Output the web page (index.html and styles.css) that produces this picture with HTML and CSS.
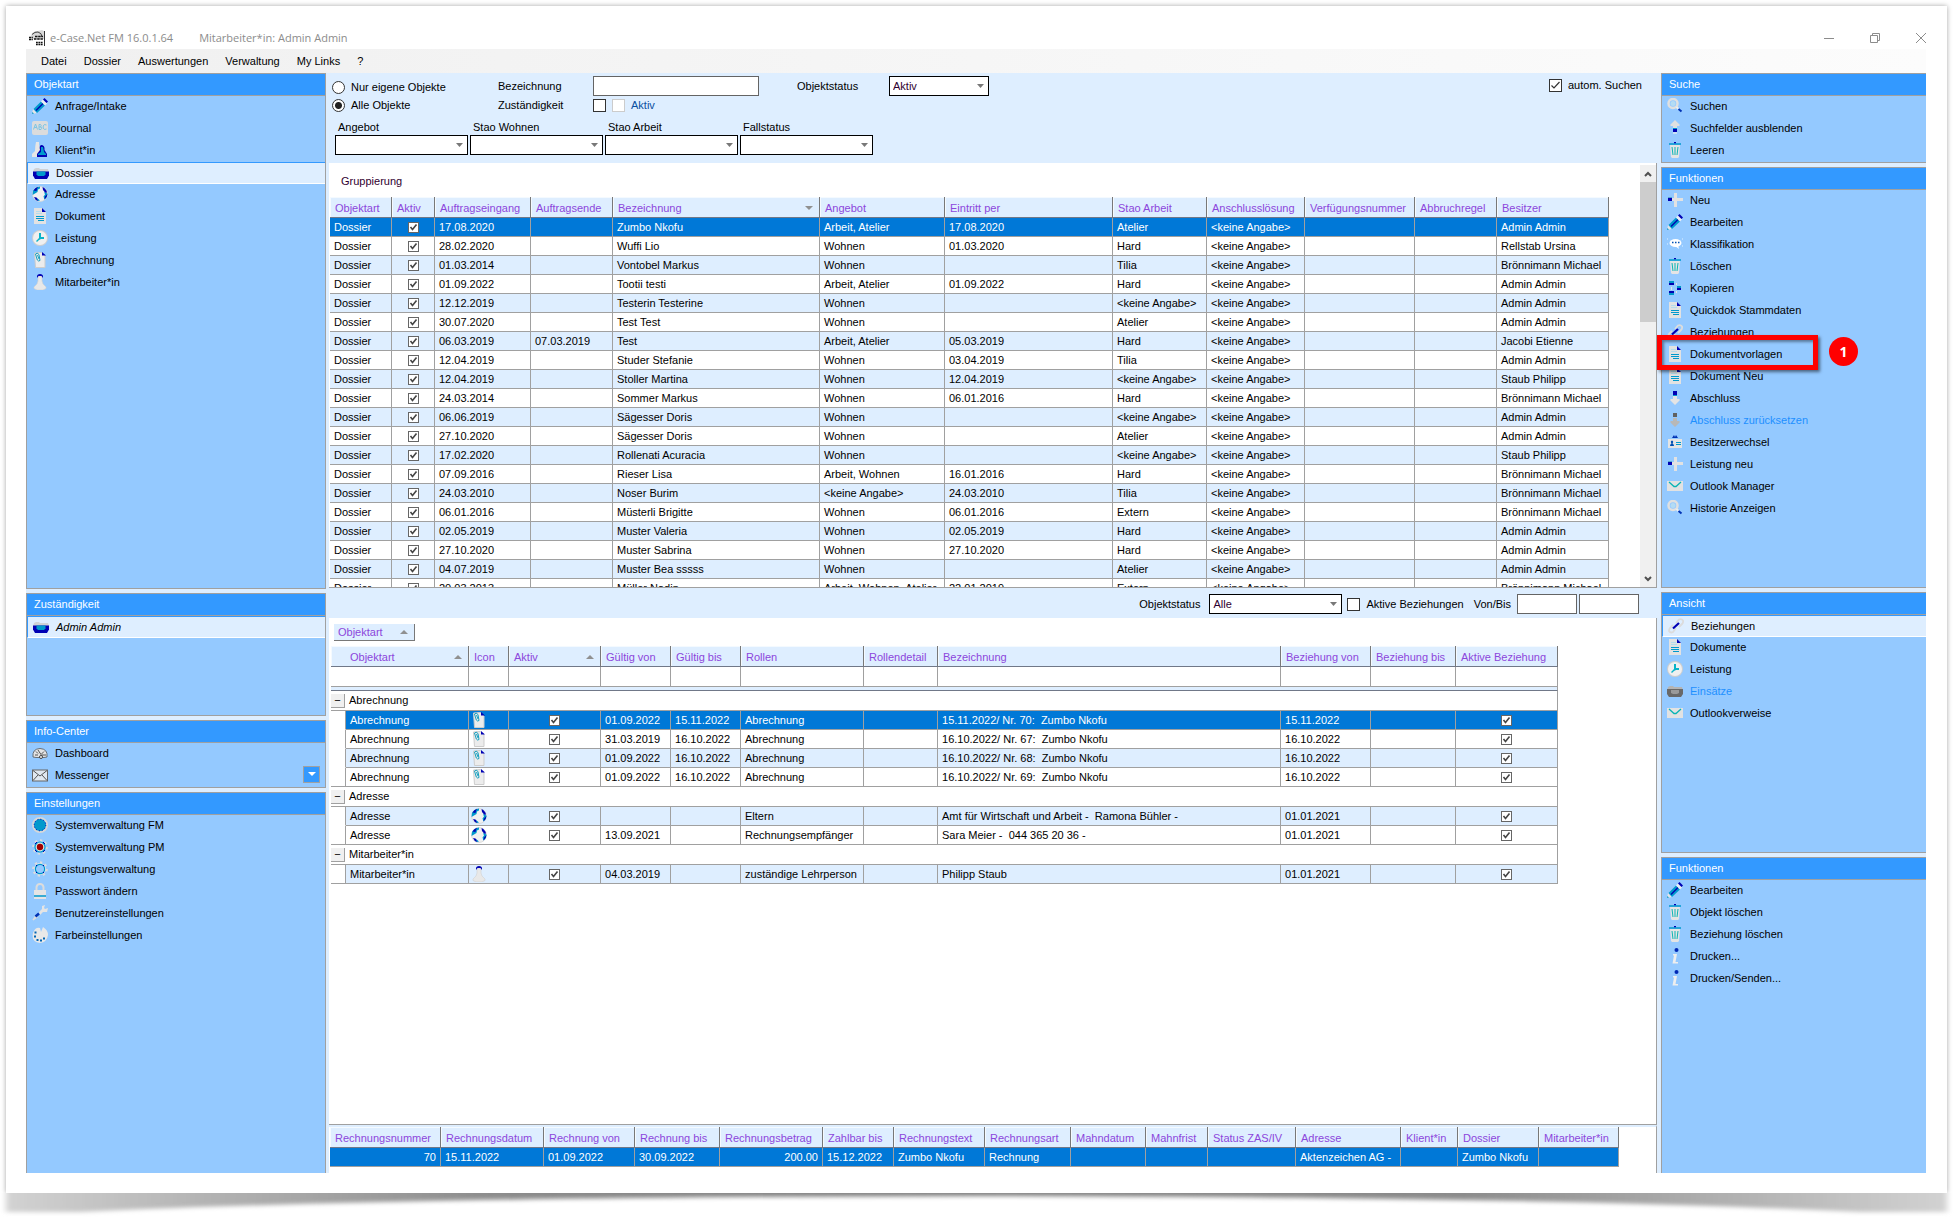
FILE: index.html
```html
<!DOCTYPE html>
<html lang="de">
<head>
<meta charset="utf-8">
<title>e-Case.Net FM</title>
<link rel="stylesheet" href="styles.css">
</head>
<body>
<svg class="defs" aria-hidden="true">
  <symbol id="pencil" viewBox="0 0 16 16"><path d="M0 16l1-5 4 4z" fill="#e6e6e6"/><path d="M0 16l.4-2 1.6 1.6z" fill="#09c"/><path d="M1.500 11L9 3.500 13 7.500 5 15z" fill="#09c"/><path d="M4 12.500L11 5.500" stroke="#0000b4" stroke-width="1.300"/><path d="M9 3.500l2-2 4 4-2 2z" fill="#e8eef4"/><path d="M11 1.500L12.500 0 16 3.500l-1.500 1.500z" fill="#0000b4"/></symbol>
  <symbol id="abc" viewBox="0 0 16 16"><rect y="1" width="16" height="14" rx="2" fill="#dcdcdc"/><path d="M1.500 9.500L3.500 4l2 5.500M2.300 7.500h2.400M7 4.500v5h2q1.500-1.200 0-2.500H7M7 4.500h1.500q1.500 1.200 0 2.500M14.500 5q-2.500-1.500-3.300 1v2q.8 2.500 3.300 1" fill="none" stroke="#7cc4e4"/></symbol>
  <symbol id="client" viewBox="0 0 16 16"><path d="M4 0h3v3l1 3v9H0v-3q2-2 3-3 0-5 1-9z" fill="#e6e6e6"/><path d="M9 3q4 0 3.500 5L15 12v3H5v-3l3-4Q7 4 9 3z" fill="#0000b4"/><path d="M9 5h2l1 5 2 2v1H6v-1l3-2z" fill="#09c"/></symbol>
  <symbol id="folder" viewBox="0 0 16 16"><path d="M1 4l2-1h3l1 1h8l1 3H0z" fill="#cfd2d6"/><path d="M0 6.500h16v4L14 14H2L0 10.500z" fill="#0000b4"/><path d="M3.500 6.500h9v3L11 11H5L3.500 9.500z" fill="#09c"/></symbol>
  <symbol id="folder-off" viewBox="0 0 16 16"><path d="M1 4l2-1h3l1 1h8l1 4H0z" fill="#b4b4b4"/><path d="M0 6h16v5l-2 3H2l-2-3z" fill="#696969"/><path d="M4 7h8v3l-2 1H6l-2-1z" fill="#9a9a9a"/></symbol>
  <symbol id="globe" viewBox="0 0 16 16"><circle cx="8" cy="8" r="7.500" fill="#f0f0f0" stroke="#d4d4d4" stroke-width=".8"/><path d="M8 .500Q3 1 1 5L.500 9 3 7.500 5.500 6 6 3.500 8 2.500z" fill="#09c"/><path d="M6 .800Q3 2 1.500 4.500L4.500 5 5 3zM10.500 1q4 2 4.500 5.500l-1.500.500L11 4z" fill="#0000b4"/><path d="M12 6l3.500 1.500Q15 12 12.500 13.500l-1-3 1.500-2z" fill="#09c"/><path d="M15.500 8q-.3 3.500-3 5.500l.5-3zM2 11l2.500.5 2 2.500-.5 1Q3 14 2 11z" fill="#0000b4"/><path d="M5 12l3 2.500L6 15z" fill="#09c"/></symbol>
  <symbol id="doc" viewBox="0 0 16 16"><path d="M2 0h8l4 4v12H2z" fill="#e2e2e2"/><path d="M10 0v4h4z" fill="#0000b4"/><path d="M4 3.500h5M4 5.500h6" stroke="#b4dcec"/><path d="M4 8.500h8M4 10.500h8M6 12.500h6" stroke="#09c"/></symbol>
  <symbol id="clock" viewBox="0 0 16 16"><circle cx="8" cy="8" r="8" fill="#cfcfcf"/><circle cx="8" cy="8" r="7" fill="#f0f0f0"/><path d="M7 3h2v4h3v2H9l-2 1-2 2-1-1 3-3z" fill="#09b4c8"/></symbol>
  <symbol id="clip" viewBox="0 0 16 16"><path d="M2.500 1l7-.500L13 4v11.500H3.500z" fill="#ececec" stroke="#cdcdcd"/><path d="M10 0v3.500h4z" fill="#0000b4"/><path d="M3.500 2l1.800 6q1.200 1.800 2.700.500L7 2.500Q5 0 3.500 2M5.500 3l1.500 4" fill="none" stroke="#09b" stroke-width=".9"/></symbol>
  <symbol id="person" viewBox="0 0 16 16"><path d="M6 2h4v5l1 3 3 3v1.500L11 16H5l-3-1.500V13l3-3 1-3z" fill="#e8e8e8" stroke="#d2d2d2" stroke-width=".6"/><path d="M5 2.500Q5 0 8 0t3 2.500V4L9.500 2h-3L5 4z" fill="#0000b4"/></symbol>
  <symbol id="search" viewBox="0 0 16 16"><circle cx="6" cy="5.500" r="4.500" fill="none" stroke="#e0e0e0" stroke-width="2.500"/><circle cx="6" cy="5.500" r="2.500" fill="#b4dcf4"/><path d="M9.500 9l2 2" stroke="#eee" stroke-width="2"/><path d="M11.500 11l3 2.500" stroke="#0032b4" stroke-width="2"/></symbol>
  <symbol id="up" viewBox="0 0 16 16"><path d="M8 0l5 5-1 1h-2v3H6V6H4L3 5z" fill="#e0e0e0"/><path d="M6 9h4v3H6z" fill="#0000b4"/><path d="M6 12h4v2H6z" fill="#c8e0f4"/><path d="M6 8h4v1H6z" fill="#09c"/></symbol>
  <symbol id="down" viewBox="0 0 16 16"><path d="M6 1h4v4H6z" fill="#0000b4"/><path d="M6 5h4v1H6z" fill="#09c"/><path d="M6 6h4v3h2l1 1-5 5-5-5 1-1h2z" fill="#e4e4e4"/></symbol>
  <symbol id="down-off" viewBox="0 0 16 16"><path d="M6 1h4v4H6z" fill="#606060"/><path d="M6 6h4v3h2l1 1-5 5-5-5 1-1h2z" fill="#b8b8b8"/></symbol>
  <symbol id="trash" viewBox="0 0 16 16"><path d="M3 3h10l-1 12-1 1H5l-1-1z" fill="#e4e4e4"/><path d="M2 2h12" stroke="#09c" stroke-width="1.500"/><path d="M7 .500h2" stroke="#0000b4" stroke-width="1.500"/><path d="M5 5l1 8M8 5v8M11 5l-1 8" stroke="#09b4b4"/></symbol>
  <symbol id="plus" viewBox="0 0 16 16"><path d="M7 1h3v5h6v3h-6v6H7V9H5V6h2z" fill="#e2e2e2"/><path d="M1 6h4v3H1z" fill="#0000b4"/><path d="M1 5h4v1H1z" fill="#5ac"/></symbol>
  <symbol id="speech" viewBox="0 0 16 16"><ellipse cx="8.500" cy="7" rx="6" ry="4" fill="#fff"/><path d="M8 10l4 3-1-4z" fill="#fff"/><path d="M5 6.500h1.500M8 6.500h1.500M11 6.500h1.500" stroke="#0050b4" stroke-width="1.500"/><path d="M0 3h1M0 8h1M15 3h1M15 10h1" stroke="#e0f0ff"/></symbol>
  <symbol id="nodes" viewBox="0 0 16 16"><path d="M2 1h5v4H2zM2 11h5v4H2zM10 6h4v4h-4z" fill="#0096c8"/><path d="M2 3h5v2H2zM2 11h5v2H2zM10 8h4v2h-4z" fill="#0000b4"/><path d="M9 3h1v2H9zM4 7h1v3H4zM9 11h1v2H9z" fill="#e4e4e4"/></symbol>
  <symbol id="link" viewBox="0 0 16 16"><path d="M8 5l3-3.500q2.500-1 4 1 .5 2-1 3.500l-3 3M8 10l-3 4q-2.500 1.500-4-1 0-1.500 1-3l3-3" fill="none" stroke="#dcdcdc" stroke-width="1.800"/><path d="M5 10.500L11 5" stroke="#0000b4" stroke-width="2.200"/></symbol>
  <symbol id="badge" viewBox="0 0 16 16"><rect x="1" y="5" width="14" height="9" fill="#e4e4e4"/><path d="M5 4l2-3 1 2 1-2 2 3z" fill="#0032b4"/><path d="M3 12q0-2 1.500-2.500Q3 7 5 6.500q2 .5.500 3Q7 10 7 12z" fill="#0050b4"/><path d="M9 8.500h5M9 10.500h5" stroke="#09c"/></symbol>
  <symbol id="mail" viewBox="0 0 16 16"><rect y="3" width="16" height="10" fill="#e2e2e2"/><path d="M2 4l5 4.500h2L14 4" fill="none" stroke="#09b4b4" stroke-width="1.300"/></symbol>
  <symbol id="info" viewBox="0 0 16 16"><path d="M6 6h4l-1.500 8H11v1.500H5.500L7 7.500H6z" fill="#eee"/><circle cx="9.500" cy="2" r="2" fill="#0028b4"/></symbol>
  <symbol id="gauge" viewBox="0 0 16 16"><path d="M1 12q-1-8 7-8.500Q16 4 15 12l-3 .500H4z" fill="#e4e4e4" stroke="#555" stroke-width=".8"/><path d="M6 5l4 6M4 6.500l2 2M12 6.500L9.500 9M3 10h3M10 10h4" stroke="#444" stroke-width=".9"/><circle cx="9" cy="12" r="1.500" fill="#fff" stroke="#444"/></symbol>
  <symbol id="envelope" viewBox="0 0 16 16"><rect x=".5" y="3" width="15" height="11" fill="#e0e8f0" stroke="#666"/><path d="M1 3.500l7 5.500 7-5.500M1 13.500L6 8M15 13.500L10 8" fill="none" stroke="#555"/></symbol>
  <symbol id="gear-full" viewBox="0 0 16 16"><circle cx="8" cy="8" r="7" fill="none" stroke="#d8d8d8" stroke-width="2"/><circle cx="8" cy="8" r="6" fill="#09c"/><circle cx="8" cy="8" r="5.800" fill="none" stroke="#0000b4" stroke-dasharray="1 2"/></symbol>
  <symbol id="gear-red" viewBox="0 0 16 16"><circle cx="8" cy="8" r="6.800" fill="none" stroke="#dcdcdc" stroke-width="2" stroke-dasharray="2.300 3"/><circle cx="8" cy="8" r="5" fill="#e4e4e4" stroke="#09c" stroke-width="1.200"/><circle cx="8" cy="8" r="3.200" fill="#a00000"/><path d="M3 5l2-2M11 3l2 2M13 11l-2 2M5 13l-2-2" stroke="#0000b4"/></symbol>
  <symbol id="gear" viewBox="0 0 16 16"><circle cx="8" cy="8" r="6.800" fill="none" stroke="#dcdcdc" stroke-width="2" stroke-dasharray="2.300 3"/><circle cx="8" cy="8" r="5.500" fill="#94c9ff" stroke="#e4e4e4"/><circle cx="8" cy="8" r="4.600" fill="none" stroke="#09c" stroke-width="1.200"/><path d="M4 5l1-1M11 4l1 1M12 11l-1 1M5 12l-1-1" stroke="#0000b4"/></symbol>
  <symbol id="lock" viewBox="0 0 16 16"><path d="M4.500 8V4Q5 1 8 1t3.500 3v4" fill="none" stroke="#dcdcdc" stroke-width="2"/><path d="M2 7h12v9H2z" fill="#e4e4e4"/><path d="M2 13h12" stroke="#09c" stroke-width="1.500"/></symbol>
  <symbol id="wrench" viewBox="0 0 16 16"><path d="M7 7l3-3 0-3 3-1-1 3 1 1 3-1-1 4-4 0-3 3z" fill="#e4e4e4"/><path d="M1 15l3-4 1 1z" stroke="#ddd" fill="none" stroke-width="1.500"/><path d="M3.500 11.500L7 8.500" stroke="#0032b4" stroke-width="2.500"/></symbol>
  <symbol id="palette" viewBox="0 0 16 16"><path d="M1 6q2-6 7-5l1 4 2-5q5 3 5 8-1 7-8 8Q-1 15 1 6z" fill="#e8e8e8"/><path d="M2.500 5.500h2M2 9.500h2M4.500 13h2M8 13.500h2M11 11.500h2" stroke="#0064b4" stroke-width="1.800"/></symbol>
</svg>

<div class="sheet">
  <header class="titlebar">
    <svg class="logo" viewBox="0 0 16 16"><path d="M2 6q1-5 7-5l4-1 2 1v8H4z" fill="#d8d8d8"/><path d="M3 4.500Q6 1.500 9 2q4 1 4 5" fill="none" stroke="#444"/><path d="M0 7.500h4M0 9.500h4M6 6.500h8M5 9h9" stroke="#111" stroke-width="1.400" stroke-dasharray="2.500 .700"/><path d="M7 12.500h7M7 14.500h7" stroke="#111" stroke-width="1.400" stroke-dasharray="1.800 .600"/><path d="M15.500 1v15" stroke="#333"/></svg>
    <span class="app-name">e-Case.Net FM 16.0.1.64</span>
    <span class="app-user">Mitarbeiter*in: Admin Admin</span>
    <div class="winctl">
      <button aria-label="Minimieren"><svg viewBox="0 0 10 10"><path d="M0 5.500h10"/></svg></button>
      <button aria-label="Verkleinern"><svg viewBox="0 0 10 10"><path d="M.500 2.500h7v7h-7zM2.500 2.500v-2h7v7h-2"/></svg></button>
      <button aria-label="Schliessen"><svg viewBox="0 0 10 10"><path d="M0 0l10 10M10 0L0 10"/></svg></button>
    </div>
  </header>
  <nav class="menubar">
    <button>Datei</button><button>Dossier</button><button>Auswertungen</button><button>Verwaltung</button><button>My Links</button><button>?</button>
  </nav>

  <div class="workspace">
    <aside class="side">
      <section class="panel p-objects">
        <h2>Objektart</h2>
        <ul>
          <li><button><svg><use href="#pencil"/></svg>Anfrage/Intake</button></li>
          <li><button><svg><use href="#abc"/></svg>Journal</button></li>
          <li><button><svg><use href="#client"/></svg>Klient*in</button></li>
          <li class="on"><button><svg><use href="#folder"/></svg>Dossier</button></li>
          <li><button><svg><use href="#globe"/></svg>Adresse</button></li>
          <li><button><svg><use href="#doc"/></svg>Dokument</button></li>
          <li><button><svg><use href="#clock"/></svg>Leistung</button></li>
          <li><button><svg><use href="#clip"/></svg>Abrechnung</button></li>
          <li><button><svg><use href="#person"/></svg>Mitarbeiter*in</button></li>
        </ul>
      </section>
      <section class="panel p-owner">
        <h2>Zuständigkeit</h2>
        <ul><li class="on"><button class="italic"><svg><use href="#folder"/></svg>Admin Admin</button></li></ul>
      </section>
      <section class="panel">
        <h2>Info-Center</h2>
        <ul>
          <li><button><svg><use href="#gauge"/></svg>Dashboard</button></li>
          <li><button><svg><use href="#envelope"/></svg>Messenger</button><button class="more" aria-label="Mehr"></button></li>
        </ul>
      </section>
      <section class="panel p-rest">
        <h2>Einstellungen</h2>
        <ul>
          <li><button><svg><use href="#gear-full"/></svg>Systemverwaltung FM</button></li>
          <li><button><svg><use href="#gear-red"/></svg>Systemverwaltung PM</button></li>
          <li><button><svg><use href="#gear"/></svg>Leistungsverwaltung</button></li>
          <li><button><svg><use href="#lock"/></svg>Passwort ändern</button></li>
          <li><button><svg><use href="#wrench"/></svg>Benutzereinstellungen</button></li>
          <li><button><svg><use href="#palette"/></svg>Farbeinstellungen</button></li>
        </ul>
      </section>
    </aside>

    <main class="center">
      <form class="filter">
        <div class="filter-top">
          <div class="radios">
            <label><input type="radio" name="scope">Nur eigene Objekte</label>
            <label><input type="radio" name="scope" checked>Alle Objekte</label>
          </div>
          <div class="fields">
            <label for="bez">Bezeichnung</label><input type="text" id="bez">
            <label for="zust">Zuständigkeit</label>
            <div class="checks"><input type="checkbox" id="zust"><label class="off"><input type="checkbox" disabled>Aktiv</label></div>
          </div>
          <div class="status"><label for="stat">Objektstatus</label><select id="stat"><option>Aktiv</option></select></div>
          <label class="auto"><input type="checkbox" checked>autom. Suchen</label>
        </div>
        <div class="combos">
          <label>Angebot<select><option></option></select></label>
          <label>Stao Wohnen<select><option></option></select></label>
          <label>Stao Arbeit<select><option></option></select></label>
          <label>Fallstatus<select><option></option></select></label>
        </div>
      </form>

      <section class="upper">
        <div class="view">
          <div class="grouping">Gruppierung</div>
          <table class="grid t-dossier">
            <colgroup><col class="w62"><col class="w43"><col class="w96"><col class="w82"><col class="w207"><col class="w125"><col class="w168"><col class="w94"><col class="w98"><col class="w110"><col class="w82"><col class="w112"></colgroup>
            <thead><tr><th>Objektart</th><th>Aktiv</th><th>Auftragseingang</th><th>Auftragsende</th><th><span>Bezeichnung<i class="sort desc"></i></span></th><th>Angebot</th><th>Eintritt per</th><th>Stao Arbeit</th><th>Anschlusslösung</th><th>Verfügungsnummer</th><th>Abbruchregel</th><th>Besitzer</th></tr></thead>
            <tbody>
            <tr class="sel"><td>Dossier</td><td><input type="checkbox" aria-label="Aktiv" checked></td><td>17.08.2020</td><td></td><td>Zumbo Nkofu</td><td>Arbeit, Atelier</td><td>17.08.2020</td><td>Atelier</td><td>&lt;keine Angabe&gt;</td><td></td><td></td><td>Admin Admin</td></tr>
            <tr><td>Dossier</td><td><input type="checkbox" aria-label="Aktiv" checked></td><td>28.02.2020</td><td></td><td>Wuffi Lio</td><td>Wohnen</td><td>01.03.2020</td><td>Hard</td><td>&lt;keine Angabe&gt;</td><td></td><td></td><td>Rellstab Ursina</td></tr>
            <tr><td>Dossier</td><td><input type="checkbox" aria-label="Aktiv" checked></td><td>01.03.2014</td><td></td><td>Vontobel Markus</td><td>Wohnen</td><td></td><td>Tilia</td><td>&lt;keine Angabe&gt;</td><td></td><td></td><td>Brönnimann Michael</td></tr>
            <tr><td>Dossier</td><td><input type="checkbox" aria-label="Aktiv" checked></td><td>01.09.2022</td><td></td><td>Tootii testi</td><td>Arbeit, Atelier</td><td>01.09.2022</td><td>Hard</td><td>&lt;keine Angabe&gt;</td><td></td><td></td><td>Admin Admin</td></tr>
            <tr><td>Dossier</td><td><input type="checkbox" aria-label="Aktiv" checked></td><td>12.12.2019</td><td></td><td>Testerin Testerine</td><td>Wohnen</td><td></td><td>&lt;keine Angabe&gt;</td><td>&lt;keine Angabe&gt;</td><td></td><td></td><td>Admin Admin</td></tr>
            <tr><td>Dossier</td><td><input type="checkbox" aria-label="Aktiv" checked></td><td>30.07.2020</td><td></td><td>Test Test</td><td>Wohnen</td><td></td><td>Atelier</td><td>&lt;keine Angabe&gt;</td><td></td><td></td><td>Admin Admin</td></tr>
            <tr><td>Dossier</td><td><input type="checkbox" aria-label="Aktiv" checked></td><td>06.03.2019</td><td>07.03.2019</td><td>Test</td><td>Arbeit, Atelier</td><td>05.03.2019</td><td>Hard</td><td>&lt;keine Angabe&gt;</td><td></td><td></td><td>Jacobi Etienne</td></tr>
            <tr><td>Dossier</td><td><input type="checkbox" aria-label="Aktiv" checked></td><td>12.04.2019</td><td></td><td>Studer Stefanie</td><td>Wohnen</td><td>03.04.2019</td><td>Tilia</td><td>&lt;keine Angabe&gt;</td><td></td><td></td><td>Admin Admin</td></tr>
            <tr><td>Dossier</td><td><input type="checkbox" aria-label="Aktiv" checked></td><td>12.04.2019</td><td></td><td>Stoller Martina</td><td>Wohnen</td><td>12.04.2019</td><td>&lt;keine Angabe&gt;</td><td>&lt;keine Angabe&gt;</td><td></td><td></td><td>Staub Philipp</td></tr>
            <tr><td>Dossier</td><td><input type="checkbox" aria-label="Aktiv" checked></td><td>24.03.2014</td><td></td><td>Sommer Markus</td><td>Wohnen</td><td>06.01.2016</td><td>Hard</td><td>&lt;keine Angabe&gt;</td><td></td><td></td><td>Brönnimann Michael</td></tr>
            <tr><td>Dossier</td><td><input type="checkbox" aria-label="Aktiv" checked></td><td>06.06.2019</td><td></td><td>Sägesser Doris</td><td>Wohnen</td><td></td><td>&lt;keine Angabe&gt;</td><td>&lt;keine Angabe&gt;</td><td></td><td></td><td>Admin Admin</td></tr>
            <tr><td>Dossier</td><td><input type="checkbox" aria-label="Aktiv" checked></td><td>27.10.2020</td><td></td><td>Sägesser Doris</td><td>Wohnen</td><td></td><td>Atelier</td><td>&lt;keine Angabe&gt;</td><td></td><td></td><td>Admin Admin</td></tr>
            <tr><td>Dossier</td><td><input type="checkbox" aria-label="Aktiv" checked></td><td>17.02.2020</td><td></td><td>Rollenati Acuracia</td><td>Wohnen</td><td></td><td>&lt;keine Angabe&gt;</td><td>&lt;keine Angabe&gt;</td><td></td><td></td><td>Staub Philipp</td></tr>
            <tr><td>Dossier</td><td><input type="checkbox" aria-label="Aktiv" checked></td><td>07.09.2016</td><td></td><td>Rieser Lisa</td><td>Arbeit, Wohnen</td><td>16.01.2016</td><td>Hard</td><td>&lt;keine Angabe&gt;</td><td></td><td></td><td>Brönnimann Michael</td></tr>
            <tr><td>Dossier</td><td><input type="checkbox" aria-label="Aktiv" checked></td><td>24.03.2010</td><td></td><td>Noser Burim</td><td>&lt;keine Angabe&gt;</td><td>24.03.2010</td><td>Tilia</td><td>&lt;keine Angabe&gt;</td><td></td><td></td><td>Brönnimann Michael</td></tr>
            <tr><td>Dossier</td><td><input type="checkbox" aria-label="Aktiv" checked></td><td>06.01.2016</td><td></td><td>Müsterli Brigitte</td><td>Wohnen</td><td>06.01.2016</td><td>Extern</td><td>&lt;keine Angabe&gt;</td><td></td><td></td><td>Brönnimann Michael</td></tr>
            <tr><td>Dossier</td><td><input type="checkbox" aria-label="Aktiv" checked></td><td>02.05.2019</td><td></td><td>Muster Valeria</td><td>Wohnen</td><td>02.05.2019</td><td>Hard</td><td>&lt;keine Angabe&gt;</td><td></td><td></td><td>Admin Admin</td></tr>
            <tr><td>Dossier</td><td><input type="checkbox" aria-label="Aktiv" checked></td><td>27.10.2020</td><td></td><td>Muster Sabrina</td><td>Wohnen</td><td>27.10.2020</td><td>Hard</td><td>&lt;keine Angabe&gt;</td><td></td><td></td><td>Admin Admin</td></tr>
            <tr><td>Dossier</td><td><input type="checkbox" aria-label="Aktiv" checked></td><td>04.07.2019</td><td></td><td>Muster Bea sssss</td><td>Wohnen</td><td></td><td>Atelier</td><td>&lt;keine Angabe&gt;</td><td></td><td></td><td>Admin Admin</td></tr>
            <tr><td>Dossier</td><td><input type="checkbox" aria-label="Aktiv" checked></td><td>20.03.2013</td><td></td><td>Müller Nadin</td><td>Arbeit, Wohnen, Atelier</td><td>22.01.2019</td><td>Extern</td><td>&lt;keine Angabe&gt;</td><td></td><td></td><td>Brönnimann Michael</td></tr>
            </tbody>
          </table>
        </div>
        <div class="scrollbar">
          <button aria-label="Nach oben"><svg viewBox="0 0 8 6"><path d="M1 5l3-3 3 3"/></svg></button>
          <div class="track"><div class="thumb"></div></div>
          <button aria-label="Nach unten"><svg viewBox="0 0 8 6"><path d="M1 1l3 3 3-3"/></svg></button>
        </div>
      </section>

      <form class="relbar">
        <label for="rstat">Objektstatus</label><select id="rstat"><option>Alle</option></select>
        <label class="active"><input type="checkbox">Aktive Beziehungen</label>
        <label for="von">Von/Bis</label><input type="text" id="von"><input type="text" aria-label="Bis">
      </form>

      <section class="lower">
        <button class="chip">Objektart<i class="sort asc"></i></button>
        <table class="grid t-rel">
          <colgroup><col class="w15"><col class="w123"><col class="w40"><col class="w92"><col class="w70"><col class="w70"><col class="w123"><col class="w74"><col class="w343"><col class="w90"><col class="w85"><col class="w102"></colgroup>
          <thead>
            <tr><th colspan="2" class="first"><span>Objektart<i class="sort asc"></i></span></th><th>Icon</th><th><span>Aktiv<i class="sort asc"></i></span></th><th>Gültig von</th><th>Gültig bis</th><th>Rollen</th><th>Rollendetail</th><th>Bezeichnung</th><th>Beziehung von</th><th>Beziehung bis</th><th>Aktive Beziehung</th></tr>
            <tr class="search"><td colspan="2"></td><td></td><td></td><td></td><td></td><td></td><td></td><td></td><td></td><td></td><td></td></tr>
            <tr class="strip"><td colspan="12"></td></tr>
          </thead>
          <tbody>
            <tr class="group"><td colspan="12"><button aria-label="Zuklappen">−</button>Abrechnung</td></tr>
            <tr class="sel"><td class="ind"></td><td>Abrechnung</td><td><svg><use href="#clip"/></svg></td><td class="c"><input type="checkbox" aria-label="Aktiv" checked></td><td>01.09.2022</td><td>15.11.2022</td><td>Abrechnung</td><td></td><td>15.11.2022/ Nr. 70:  Zumbo Nkofu</td><td>15.11.2022</td><td></td><td class="c"><input type="checkbox" aria-label="Aktive Beziehung" checked></td></tr>
            <tr><td class="ind"></td><td>Abrechnung</td><td><svg><use href="#clip"/></svg></td><td class="c"><input type="checkbox" aria-label="Aktiv" checked></td><td>31.03.2019</td><td>16.10.2022</td><td>Abrechnung</td><td></td><td>16.10.2022/ Nr. 67:  Zumbo Nkofu</td><td>16.10.2022</td><td></td><td class="c"><input type="checkbox" aria-label="Aktive Beziehung" checked></td></tr>
            <tr class="alt"><td class="ind"></td><td>Abrechnung</td><td><svg><use href="#clip"/></svg></td><td class="c"><input type="checkbox" aria-label="Aktiv" checked></td><td>01.09.2022</td><td>16.10.2022</td><td>Abrechnung</td><td></td><td>16.10.2022/ Nr. 68:  Zumbo Nkofu</td><td>16.10.2022</td><td></td><td class="c"><input type="checkbox" aria-label="Aktive Beziehung" checked></td></tr>
            <tr class="end"><td class="ind"></td><td>Abrechnung</td><td><svg><use href="#clip"/></svg></td><td class="c"><input type="checkbox" aria-label="Aktiv" checked></td><td>01.09.2022</td><td>16.10.2022</td><td>Abrechnung</td><td></td><td>16.10.2022/ Nr. 69:  Zumbo Nkofu</td><td>16.10.2022</td><td></td><td class="c"><input type="checkbox" aria-label="Aktive Beziehung" checked></td></tr>
            <tr class="group"><td colspan="12"><button aria-label="Zuklappen">−</button>Adresse</td></tr>
            <tr class="alt"><td class="ind"></td><td>Adresse</td><td><svg><use href="#globe"/></svg></td><td class="c"><input type="checkbox" aria-label="Aktiv" checked></td><td></td><td></td><td>Eltern</td><td></td><td>Amt für Wirtschaft und Arbeit -  Ramona Bühler -</td><td>01.01.2021</td><td></td><td class="c"><input type="checkbox" aria-label="Aktive Beziehung" checked></td></tr>
            <tr class="end"><td class="ind"></td><td>Adresse</td><td><svg><use href="#globe"/></svg></td><td class="c"><input type="checkbox" aria-label="Aktiv" checked></td><td>13.09.2021</td><td></td><td>Rechnungsempfänger</td><td></td><td>Sara Meier -  044 365 20 36 -</td><td>01.01.2021</td><td></td><td class="c"><input type="checkbox" aria-label="Aktive Beziehung" checked></td></tr>
            <tr class="group"><td colspan="12"><button aria-label="Zuklappen">−</button>Mitarbeiter*in</td></tr>
            <tr class="alt end"><td class="ind"></td><td>Mitarbeiter*in</td><td><svg><use href="#person"/></svg></td><td class="c"><input type="checkbox" aria-label="Aktiv" checked></td><td>04.03.2019</td><td></td><td>zuständige Lehrperson</td><td></td><td>Philipp Staub</td><td>01.01.2021</td><td></td><td class="c"><input type="checkbox" aria-label="Aktive Beziehung" checked></td></tr>
          </tbody>
        </table>
      </section>

      <section class="bills">
        <table class="grid t-bill">
          <colgroup><col class="w111"><col class="w103"><col class="w91"><col class="w85"><col class="w103"><col class="w71"><col class="w91"><col class="w86"><col class="w75"><col class="w62"><col class="w88"><col class="w105"><col class="w57"><col class="w81"><col class="w80"></colgroup>
          <thead><tr><th>Rechnungsnummer</th><th>Rechnungsdatum</th><th>Rechnung von</th><th>Rechnung bis</th><th>Rechnungsbetrag</th><th>Zahlbar bis</th><th>Rechnungstext</th><th>Rechnungsart</th><th>Mahndatum</th><th>Mahnfrist</th><th>Status ZAS/IV</th><th>Adresse</th><th>Klient*in</th><th>Dossier</th><th>Mitarbeiter*in</th></tr></thead>
          <tbody><tr class="sel"><td class="r">70</td><td>15.11.2022</td><td>01.09.2022</td><td>30.09.2022</td><td class="r">200.00</td><td>15.12.2022</td><td>Zumbo Nkofu</td><td>Rechnung</td><td></td><td></td><td></td><td>Aktenzeichen AG -</td><td></td><td>Zumbo Nkofu</td><td></td></tr></tbody>
        </table>
      </section>
    </main>

    <aside class="side right">
      <section class="panel p-search">
        <h2>Suche</h2>
        <ul>
          <li><button><svg><use href="#search"/></svg>Suchen</button></li>
          <li><button><svg><use href="#up"/></svg>Suchfelder ausblenden</button></li>
          <li><button><svg><use href="#trash"/></svg>Leeren</button></li>
        </ul>
      </section>
      <section class="panel p-func">
        <h2>Funktionen</h2>
        <ul>
          <li><button><svg><use href="#plus"/></svg>Neu</button></li>
          <li><button><svg><use href="#pencil"/></svg>Bearbeiten</button></li>
          <li><button><svg><use href="#speech"/></svg>Klassifikation</button></li>
          <li><button><svg><use href="#trash"/></svg>Löschen</button></li>
          <li><button><svg><use href="#nodes"/></svg>Kopieren</button></li>
          <li><button><svg><use href="#doc"/></svg>Quickdok Stammdaten</button></li>
          <li><button><svg><use href="#link"/></svg>Beziehungen</button></li>
          <li class="marked"><button><svg><use href="#doc"/></svg>Dokumentvorlagen</button><span class="frame"></span><span class="step">1</span></li>
          <li><button><svg><use href="#doc"/></svg>Dokument Neu</button></li>
          <li><button><svg><use href="#down"/></svg>Abschluss</button></li>
          <li><button disabled><svg><use href="#down-off"/></svg>Abschluss zurücksetzen</button></li>
          <li><button><svg><use href="#badge"/></svg>Besitzerwechsel</button></li>
          <li><button><svg><use href="#plus"/></svg>Leistung neu</button></li>
          <li><button><svg><use href="#mail"/></svg>Outlook Manager</button></li>
          <li><button><svg><use href="#search"/></svg>Historie Anzeigen</button></li>
        </ul>
      </section>
      <section class="panel p-view">
        <h2>Ansicht</h2>
        <ul>
          <li class="on"><button><svg><use href="#link"/></svg>Beziehungen</button></li>
          <li><button><svg><use href="#doc"/></svg>Dokumente</button></li>
          <li><button><svg><use href="#clock"/></svg>Leistung</button></li>
          <li><button disabled><svg><use href="#folder-off"/></svg>Einsätze</button></li>
          <li><button><svg><use href="#mail"/></svg>Outlookverweise</button></li>
        </ul>
      </section>
      <section class="panel p-rest">
        <h2>Funktionen</h2>
        <ul>
          <li><button><svg><use href="#pencil"/></svg>Bearbeiten</button></li>
          <li><button><svg><use href="#trash"/></svg>Objekt löschen</button></li>
          <li><button><svg><use href="#trash"/></svg>Beziehung löschen</button></li>
          <li><button><svg><use href="#info"/></svg>Drucken...</button></li>
          <li><button><svg><use href="#info"/></svg>Drucken/Senden...</button></li>
        </ul>
      </section>
    </aside>
  </div>
</div>
<svg class="curl" viewBox="0 0 1960 29" preserveAspectRatio="none" aria-hidden="true">
  <defs>
    <linearGradient id="cg"><stop offset="0" stop-color="#d2d2d2"/><stop offset=".1" stop-color="#b4b4b4"/><stop offset=".25" stop-color="#8c8c8c"/><stop offset=".5" stop-color="#808080"/><stop offset=".75" stop-color="#8c8c8c"/><stop offset=".9" stop-color="#b4b4b4"/><stop offset="1" stop-color="#d2d2d2"/></linearGradient>
    <filter id="cb" x="-1%" y="-50%" width="102%" height="200%"><feGaussianBlur stdDeviation="3 2"/></filter>
  </defs>
  <path d="M6-10V19H80Q400 4 980 3Q1560 4 1860 19H1947V-10z" fill="url(#cg)" filter="url(#cb)"/>
</svg>
</body>
</html>
```
FILE: styles.css
```css
* { box-sizing: border-box; }

body {
  margin: 0;
  min-height: 100vh;
  display: flex;
  flex-direction: column;
  background: #fff;
  color: #000;
  font: 11px/16px "Liberation Sans", Arial, sans-serif;
}

button, input, select {
  margin: 0;
  padding: 0;
  border: 0;
  border-radius: 0;
  background: none;
  color: inherit;
  font: inherit;
}

ul { margin: 0; padding: 0; list-style: none; }
.defs { display: none; }

.sheet {
  flex: 1;
  display: flex;
  flex-direction: column;
  margin: 6px 13px 0 6px;
  padding: 16px 21px 20px 20px;
  background: #fff;
  box-shadow: 0 0 5px rgba(0, 0, 0, .35);
  position: relative;
  z-index: 1;
  clip-path: inset(-6px -6px 0 -6px);
}

.curl { display: block; width: 100%; height: 29px; }

/* title bar and menu */
.titlebar {
  display: flex;
  align-items: center;
  height: 27px;
  padding-top: 4px;
  padding-left: 3px;
  color: #8c8c8c;
  font: 11px/16px "Open Sans", "Noto Sans", sans-serif;
}
.logo { width: 16px; height: 16px; margin-right: 5px; }
.app-name { margin-right: 26px; }
.winctl { display: flex; gap: 36px; margin-left: auto; }
.winctl button { display: flex; }
.winctl svg { width: 10px; height: 10px; fill: none; stroke: #8c8c8c; }

.menubar {
  display: flex;
  gap: 17px;
  height: 24px;
  padding-left: 15px;
  background: linear-gradient(90deg, #f0f0f0, #fcfcfc);
}

/* columns */
.workspace {
  flex: 1;
  display: grid;
  grid-template-columns: 300px minmax(0, 1fr) 265px;
  background: #deeeff;
}
.side { display: flex; flex-direction: column; gap: 4px; }
.panel {
  display: flex;
  flex-direction: column;
  border: 1px solid #a0a0a0;
  background: #94c9ff;
}
.right .panel { border-right: 0; }
.panel h2 {
  margin: 0;
  height: 22px;
  padding-left: 7px;
  border-bottom: 1px solid #a0a0a0;
  background: #39f;
  color: #fff;
  font-size: 11px;
  font-weight: normal;
  line-height: 21px;
}
.p-objects { min-height: 516px; }
.p-owner { min-height: 123px; }
.p-search { min-height: 89px; }
.p-func { min-height: 421px; }
.p-view { min-height: 261px; }
.p-rest { flex: 1; border-bottom: 0; }

.panel li { display: flex; align-items: center; height: 22px; }
.panel li > button:first-child {
  flex: 1;
  display: flex;
  align-items: center;
  gap: 7px;
  height: 22px;
  padding: 0 0 2px 5px;
  text-align: left;
}
.panel svg { width: 16px; height: 16px; }
.panel .on {
  border-top: 1px solid #39f;
  border-left: 1px solid #39f;
  border-bottom: 1px solid #fff;
  background: #deeeff;
}
.panel .on > button:first-child { padding-bottom: 0; }
.panel button:disabled { color: #1e90ff; }
.italic { font-style: italic; }
.panel .more {
  display: flex;
  align-items: center;
  justify-content: center;
  width: 17px;
  height: 17px;
  margin: 0 5px 4px 0;
  border: 1px solid #a0a0a0;
  background: #39f;
}
.more::after {
  content: "";
  border: 4px solid transparent;
  border-top-color: #fff;
  border-bottom: 0;
}

/* highlighted step */
.marked { position: relative; z-index: 2; }
.frame {
  position: absolute;
  left: -5px;
  top: -9px;
  width: 161px;
  height: 35px;
  border: 5px solid #f00;
  box-shadow: 2px 2px 3px rgba(0, 0, 0, .5), inset 2px 2px 3px rgba(0, 0, 0, .4);
  pointer-events: none;
}
.step {
  position: absolute;
  left: 167px;
  top: -7px;
  width: 29px;
  height: 29px;
  border-radius: 50%;
  background: #f00;
  color: #fff;
  font: bold 14px/29px "Open Sans", sans-serif;
  text-align: center;
}

/* form controls */
input[type="text"] { height: 20px; border: 1px solid #646464; background: #fff; }
select {
  appearance: none;
  height: 20px;
  padding-left: 3px;
  border: 1px solid #000;
  background: #fff url("data:image/svg+xml,%3Csvg xmlns='http://www.w3.org/2000/svg' width='7' height='4'%3E%3Cpath d='M0 0h7L3.5 4z' fill='%23787878'/%3E%3C/svg%3E") no-repeat right 4px center;
  color: #300030;
}
input[type="checkbox"] {
  appearance: none;
  flex: none;
  width: 13px;
  height: 13px;
  border: 1px solid #333;
  background: #fff;
}
input[type="checkbox"]:disabled { border-color: #ccc; }
input[type="checkbox"]:checked {
  background: #fff url("data:image/svg+xml,%3Csvg xmlns='http://www.w3.org/2000/svg' viewBox='0 0 11 11'%3E%3Cpath d='M1.500 5.500L4 8l5.500-6' fill='none' stroke='%23333' stroke-width='1.200'/%3E%3C/svg%3E") no-repeat center;
}
input[type="radio"] {
  appearance: none;
  width: 13px;
  height: 13px;
  border: 1px solid #333;
  border-radius: 50%;
  background: #fff;
}
input[type="radio"]:checked { background: radial-gradient(circle, #222 3px, #fff 4px); }

/* search form */
.center { display: flex; flex-direction: column; padding: 0 4px 0 3px; }
.filter { height: 90px; padding: 3px 0 0 3px; }
.filter-top { display: flex; align-items: flex-start; height: 44px; }
.radios { width: 166px; padding-top: 2px; }
.radios label { display: flex; align-items: center; gap: 6px; height: 18px; }
.fields {
  display: grid;
  grid-template-columns: 95px 166px;
  grid-template-rows: 20px 18px;
  align-items: center;
  width: 299px;
}
.checks { display: flex; align-items: center; gap: 6px; }
.off { display: flex; gap: 6px; align-items: center; color: #0a50a0; }
.status { display: flex; align-items: center; }
.status label { width: 92px; }
.status select { width: 100px; }
.auto { display: flex; align-items: center; gap: 6px; height: 18px; margin-left: auto; padding-right: 15px; }
.combos { display: flex; gap: 2px; padding-left: 3px; }
.combos label { display: flex; flex-direction: column; width: 133px; line-height: 15px; text-indent: 3px; }
.combos select { line-height: 16px; }

/* dossier list */
.upper {
  display: flex;
  height: 425px;
  border-right: 1px solid #a0a0a0;
  border-bottom: 1px solid #a0a0a0;
  background: #fff;
}
.view { flex: 1; min-width: 0; overflow: hidden; padding-left: 1px; }
.grouping { height: 34px; padding-left: 11px; line-height: 36px; color: #300030; }
.scrollbar { display: flex; flex-direction: column; width: 16px; margin-top: 2px; background: #f0f0f0; }
.scrollbar button { display: flex; align-items: center; justify-content: center; height: 17px; }
.scrollbar svg { width: 8px; height: 6px; fill: none; stroke: #505050; stroke-width: 2; }
.track { flex: 1; }
.thumb { height: 36%; background: #cdcdcd; }

/* data grids */
.grid { table-layout: fixed; border-collapse: separate; border-spacing: 0; width: 0; }
.grid th {
  height: 21px;
  padding: 1px 0 0 5px;
  border-right: 1px solid #787878;
  border-bottom: 1px solid #707888;
  box-shadow: inset 1px 1px #f4faff;
  background: #deeeff;
  color: #8c46dc;
  font-weight: normal;
  text-align: left;
  white-space: nowrap;
}
.grid th span { display: flex; align-items: center; justify-content: space-between; padding-right: 6px; }
.grid th.first { padding-left: 19px; }
.grid td {
  height: 19px;
  padding: 0 0 0 4px;
  border-right: 1px solid #a0a0a0;
  border-bottom: 1px solid #a0a0a0;
  line-height: 18px;
  white-space: pre;
  overflow: hidden;
}
.grid input[type="checkbox"] { display: block; width: 11px; height: 11px; margin: 0 auto; border-color: #666; }
.grid input[type="checkbox"]:checked {
  background: #fff url("data:image/svg+xml,%3Csvg xmlns='http://www.w3.org/2000/svg' viewBox='0 0 9 9'%3E%3Cpath d='M1.500 4L3.500 6.500 7.500 1.500' fill='none' stroke='%23444' stroke-width='1.600'/%3E%3C/svg%3E") no-repeat center / 9px 9px;
}
.t-dossier td:nth-child(2), .grid td.c { padding: 0; }
.t-dossier tbody tr:nth-child(odd) td, .grid tr.alt td { background: #deeeff; }
.grid tbody tr.sel td, .t-dossier tbody tr.sel td { background: #0078d7; color: #fff; }
.grid td.r { padding-right: 4px; text-align: right; }
.grid td svg { display: block; width: 16px; height: 16px; margin-left: -2px; }

.sort { display: block; border: 4px solid transparent; }
.sort.desc { border-top-color: #909090; border-bottom: 0; }
.sort.asc { border-bottom-color: #909090; border-top: 0; }

.w15 { width: 15px; } .w40 { width: 40px; } .w43 { width: 43px; } .w57 { width: 57px; }
.w62 { width: 62px; } .w70 { width: 70px; } .w71 { width: 71px; } .w74 { width: 74px; }
.w75 { width: 75px; } .w80 { width: 80px; } .w81 { width: 81px; } .w82 { width: 82px; }
.w85 { width: 85px; } .w86 { width: 86px; } .w88 { width: 88px; } .w90 { width: 90px; }
.w91 { width: 91px; } .w92 { width: 92px; } .w94 { width: 94px; } .w96 { width: 96px; }
.w98 { width: 98px; } .w102 { width: 102px; } .w103 { width: 103px; } .w105 { width: 105px; }
.w110 { width: 110px; } .w111 { width: 111px; } .w112 { width: 112px; } .w123 { width: 123px; }
.w125 { width: 125px; } .w168 { width: 168px; } .w207 { width: 207px; } .w343 { width: 343px; }

/* relations */
.relbar { display: flex; align-items: center; justify-content: flex-end; height: 30px; padding: 2px 18px 0 0; }
.relbar select { width: 133px; margin: 0 5px 0 9px; }
.relbar .active { display: flex; align-items: center; gap: 6px; margin-right: 10px; }
.relbar input[type="text"] { width: 60px; margin-left: 2px; }
.relbar #von { margin-left: 6px; }
.lower {
  flex: 1;
  padding: 6px 0 0 2px;
  border-right: 1px solid #a0a0a0;
  border-bottom: 1px solid #a0a0a0;
  background: #fff;
}
.chip {
  display: flex;
  align-items: center;
  justify-content: space-between;
  width: 81px;
  height: 17px;
  margin: 0 0 5px 3px;
  padding: 0 6px 0 4px;
  border-right: 1px solid #787878;
  border-bottom: 1px solid #787878;
  background: #deeeff;
  color: #8c46dc;
}
.grid .search td { height: 20px; }
.grid .strip td { height: 4px; background: #deeeff; border-bottom-color: #707888; }
.grid .group td { height: 20px; padding: 0; line-height: 19px; }
.group button {
  width: 14px;
  height: 14px;
  margin-right: 4px;
  border-right: 1px solid #a0a0a0;
  border-bottom: 1px solid #a0a0a0;
  background: #f0f0f0;
  line-height: 12px;
}
.grid tbody tr td.ind { background: #fff; border-bottom-color: transparent; }
.grid tbody tr.end td.ind { border-bottom-color: #a0a0a0; }

/* invoices */
.bills {
  height: 48px;
  padding: 0 0 0 1px;
  border-top: 2px solid #deeeff;
  border-right: 1px solid #a0a0a0;
  background: #fff;
}
```
